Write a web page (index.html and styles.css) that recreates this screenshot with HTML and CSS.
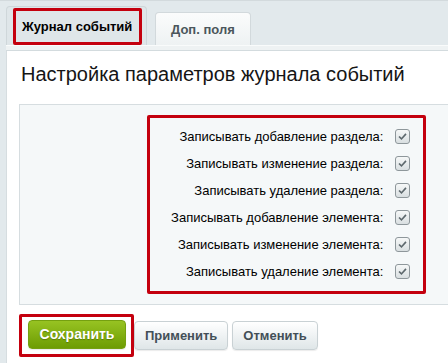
FILE: index.html
```html
<!DOCTYPE html>
<html lang="ru">
<head>
  <meta charset="UTF-8">
  <title>Журнал событий</title>
  <link rel="stylesheet" href="styles.css">
</head>
<body>
  <div class="tabs">
    <div class="tab tab-active">
      <span class="mark tab-mark">Журнал событий</span>
    </div>
    <div class="tab">Доп. поля</div>
  </div>
  <div class="tabs-line"></div>

  <div class="panel">
    <h1>Настройка параметров журнала событий</h1>

    <div class="settings">
      <div class="mark options">
        <label class="row">Записывать добавление раздела: <span class="check"><svg viewBox="0 0 15 15"><path d="M3.5 7.5 L6.3 10.3 L11.5 4.5"/></svg></span></label>
        <label class="row">Записывать изменение раздела: <span class="check"><svg viewBox="0 0 15 15"><path d="M3.5 7.5 L6.3 10.3 L11.5 4.5"/></svg></span></label>
        <label class="row">Записывать удаление раздела: <span class="check"><svg viewBox="0 0 15 15"><path d="M3.5 7.5 L6.3 10.3 L11.5 4.5"/></svg></span></label>
        <label class="row">Записывать добавление элемента: <span class="check"><svg viewBox="0 0 15 15"><path d="M3.5 7.5 L6.3 10.3 L11.5 4.5"/></svg></span></label>
        <label class="row">Записывать изменение элемента: <span class="check"><svg viewBox="0 0 15 15"><path d="M3.5 7.5 L6.3 10.3 L11.5 4.5"/></svg></span></label>
        <label class="row">Записывать удаление элемента: <span class="check"><svg viewBox="0 0 15 15"><path d="M3.5 7.5 L6.3 10.3 L11.5 4.5"/></svg></span></label>
      </div>
    </div>

    <div class="buttons">
      <span class="mark save-mark"><button class="btn btn-save">Сохранить</button></span>
      <button class="btn">Применить</button>
      <button class="btn">Отменить</button>
    </div>
  </div>
</body>
</html>
```

FILE: styles.css
```css
/* base */
* {
  box-sizing: border-box;
  margin: 0;
  padding: 0;
}

body {
  font-family: 'Liberation Sans', Arial, sans-serif;
  font-size: 13px;
  color: #000;
  background: #e2e9ec;
  border-top: 1px solid #d3dadd;
  height: 363px;
  overflow: hidden;
}

/* annotation frame */
.mark {
  border: 3px solid #c4000e;
  border-radius: 2px;
}

/* tabs */
.tabs {
  display: flex;
  align-items: flex-end;
  padding: 5px 0 0 6px;
  height: 44px;
}

.tab {
  height: 33px;
  padding: 0 15px;
  margin-right: 8px;
  display: flex;
  align-items: center;
  font-weight: bold;
  color: #4b565c;
  background: linear-gradient(#fbfcfc, #eef2f3);
  border: 1px solid #d2d9dc;
  border-bottom: none;
  border-radius: 4px 4px 0 0;
}

.tab-active {
  height: 39px;
  padding: 0 4px 0 6px;
  align-items: stretch;
  background: #dfe6e9;
  border-color: #cfd7da;
  color: #000;
}

.tab-mark {
  display: flex;
  align-items: center;
  padding: 0 6px 0 6px;
  margin-top: 1px;
  width: 129px;
}

.tabs-line {
  height: 6px;
  margin-left: 6px;
  background: #eef2f3;
  border-top: 1px solid #f9fbfb;
  border-bottom: 1px solid #d3dbde;
}

/* panel */
.panel {
  background: #fff;
  margin-left: 6px;
  border-left: 1px solid #d6dde0;
  padding: 12px 0 0 12px;
  height: 320px;
}

h1 {
  font-size: 20px;
  font-weight: normal;
  line-height: 23px;
  color: #151515;
  margin: 0 0 18px 2px;
}

.settings {
  background: #f5f8f9;
  border: 1px solid #d6dde0;
  border-right: none;
  padding: 10px 0 10px 0;
}

.options {
  display: flex;
  flex-direction: column;
  align-items: flex-end;
  margin-left: 127px;
  width: 279px;
  padding: 5px 13px 6px 0;
}

.row {
  height: 27px;
  display: flex;
  align-items: center;
  gap: 8px;
  white-space: pre;
}

.check {
  width: 15px;
  height: 15px;
  border: 1px solid #8e979b;
  border-radius: 3px;
  background: linear-gradient(#f6f8f8, #d9dfe1);
  display: flex;
}

.check svg {
  width: 13px;
  height: 13px;
}

.check path {
  fill: none;
  stroke: #5d686d;
  stroke-width: 1.9;
}

/* buttons */
.buttons {
  display: flex;
  align-items: center;
  margin: 9px 0 0 0;
}

.save-mark {
  display: flex;
  padding: 3px 5px 5px 6px;
}

.btn {
  font-family: inherit;
  font-size: 13px;
  font-weight: bold;
  height: 29px;
  padding: 0 10px 1px;
  margin-right: 4px;
  color: #434f57;
  background: linear-gradient(#ffffff, #dfe6e8);
  border: 1px solid #c9d1d4;
  border-radius: 4px;
  box-shadow: 0 1px 1px rgba(0, 0, 0, 0.08);
}

.btn-save {
  width: 98px;
  margin-right: 0;
  color: #fff;
  font-size: 14px;
  text-shadow: 0 1px 1px rgba(60, 80, 0, 0.5);
  background: linear-gradient(#97c322, #6d9c03);
  border-color: #75a010;
}
```
